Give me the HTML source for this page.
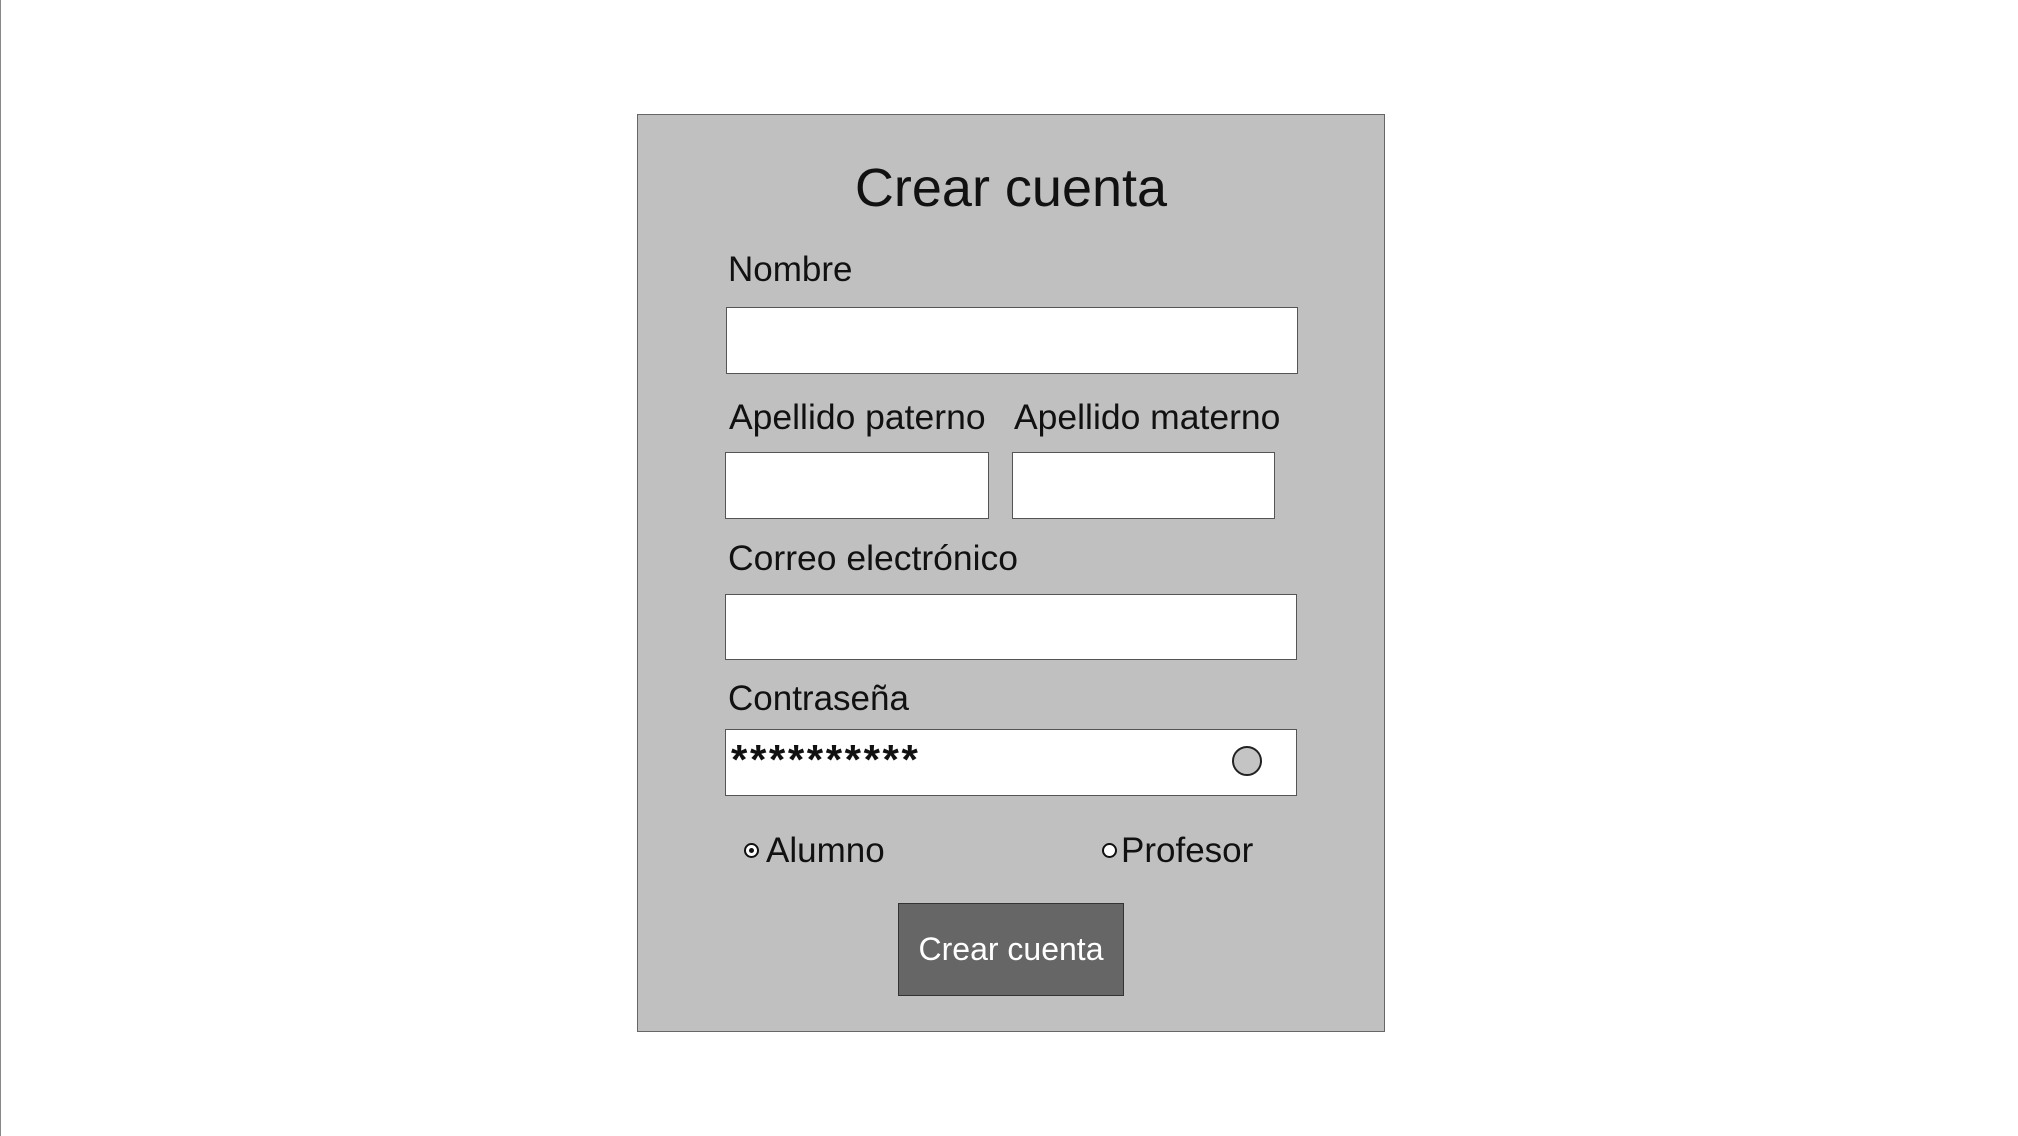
<!DOCTYPE html>
<html><head><meta charset="utf-8"><style>
html,body{margin:0;padding:0}
body{width:2018px;height:1136px;background:#fff;position:relative;overflow:hidden;font-family:"Liberation Sans",sans-serif;color:#111}
.l{position:absolute;left:0;top:0;width:1px;height:1136px;background:#888}
.p{position:absolute;left:637px;top:114px;width:748px;height:918px;background:#c0c0c0;border:1.5px solid #666;box-sizing:border-box}
.t{position:absolute;white-space:nowrap;line-height:1}
.in{position:absolute;background:#fff;border:1.5px solid #555;box-sizing:border-box}
.btn{position:absolute;left:898px;top:903px;width:226px;height:93px;background:#666;border:1.5px solid #333;box-sizing:border-box;color:#fff;font-size:32px;text-align:center;line-height:90px}
</style></head><body>
<div class="l"></div>
<div class="p"></div>
<div class="t" style="left:0;width:2022px;text-align:center;top:161px;font-size:54px">Crear cuenta</div>
<div class="t" style="left:728px;top:252px;font-size:35px">Nombre</div>
<div class="in" style="left:726px;top:307px;width:572px;height:67px"></div>
<div class="t" style="left:729px;top:400px;font-size:35.5px">Apellido paterno</div>
<div class="t" style="left:1014px;top:400px;font-size:35.5px">Apellido materno</div>
<div class="in" style="left:725px;top:452px;width:264px;height:67px"></div>
<div class="in" style="left:1012px;top:452px;width:263px;height:67px"></div>
<div class="t" style="left:728px;top:541px;font-size:35.5px">Correo electrónico</div>
<div class="in" style="left:725px;top:594px;width:572px;height:66px"></div>
<div class="t" style="left:728px;top:681px;font-size:35px">Contraseña</div>
<div class="in" style="left:725px;top:729px;width:572px;height:67px"></div>
<div class="t" style="left:731px;top:739px;font-size:42px;letter-spacing:2.6px;font-weight:bold">**********</div>
<div style="position:absolute;left:1232px;top:746px;width:30px;height:30px;border-radius:50%;background:#c4c4c4;border:2px solid #222;box-sizing:border-box"></div>
<div style="position:absolute;left:744px;top:843px;width:15px;height:15px;border-radius:50%;background:#fff;border:2px solid #111;box-sizing:border-box"><div style="position:absolute;left:3px;top:3px;width:5px;height:5px;border-radius:50%;background:#111"></div></div>
<div class="t" style="left:766px;top:833px;font-size:35px">Alumno</div>
<div style="position:absolute;left:1102px;top:843px;width:15px;height:15px;border-radius:50%;background:#fff;border:2px solid #111;box-sizing:border-box"></div>
<div class="t" style="left:1121px;top:833px;font-size:35px">Profesor</div>
<div class="btn">Crear cuenta</div>
</body></html>
